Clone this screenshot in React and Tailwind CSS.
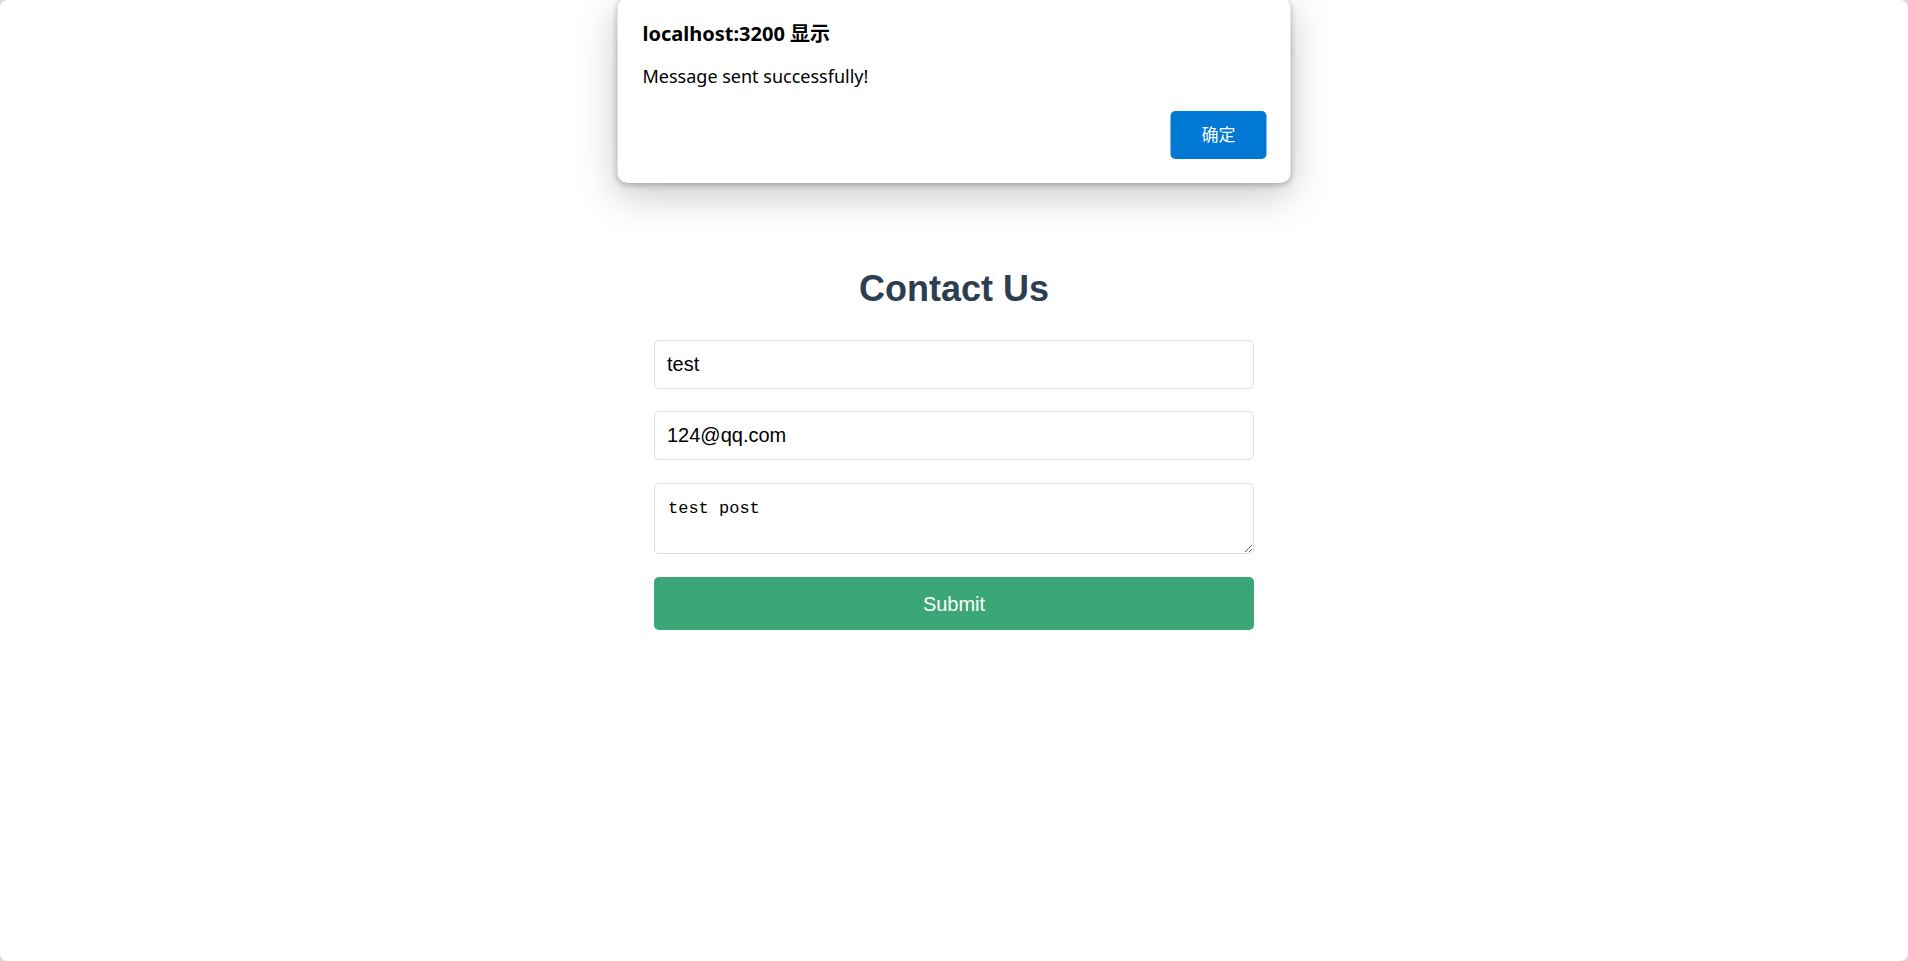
import React from 'react';

// Browser alert that sits over the page
const AlertBox = () => (
  <div
    className="absolute left-1/2 top-[-2px] w-[673px] -translate-x-1/2 rounded-[10px] bg-white pt-[24px] pb-[24px] pl-[25px] pr-[24px] shadow-[0_12px_40px_rgba(0,0,0,0.22),0_2px_6px_rgba(0,0,0,0.25)]"
    style={{ fontFamily: '"Noto Sans", "Noto Sans CJK SC", sans-serif' }}
  >
    <div className="text-[20px] font-bold leading-[24px] text-black">localhost:3200 显示</div>
    <div className="mt-[18px] text-[18px] leading-[24px] text-black">Message sent successfully!</div>
    <div className="mt-[23px] flex justify-end">
      <button className="flex h-[48px] w-[96px] items-center justify-center rounded-[5px] bg-[#0078d4] text-[17px] text-white">
        确定
      </button>
    </div>
  </div>
);

const ContactPage = () => {
  return (
    <div className="h-[961px] bg-[#dcdcdc]">
      <div className="relative h-full overflow-hidden rounded-[8px] bg-white">
        <AlertBox />

        <div
          className="flex flex-col items-center pt-[268px]"
          style={{ fontFamily: '"Liberation Sans", Arial, sans-serif' }}
        >
          <h2 className="text-[36px] font-bold leading-[42px] text-[#2c3e50]">Contact Us</h2>

          <form className="mt-[30px] flex w-[600px] flex-col" onSubmit={(e) => e.preventDefault()}>
            <input
              type="text"
              defaultValue="test"
              className="h-[49px] w-full rounded-[5px] border border-[#dddddd] px-[12px] text-[20px] text-black outline-none"
            />
            <input
              type="email"
              defaultValue="124@qq.com"
              className="mt-[22px] h-[49px] w-full rounded-[5px] border border-[#dddddd] px-[12px] text-[20px] text-black outline-none"
            />
            <textarea
              defaultValue="test post"
              className="mt-[23px] block h-[71px] w-full rounded-[5px] border border-[#dddddd] px-[13px] pt-[15px] text-[17px] leading-[20px] text-black outline-none"
              style={{ fontFamily: '"Liberation Mono", monospace' }}
            />
            <button
              type="submit"
              className="mt-[23px] h-[53px] w-full rounded-[5px] bg-[#3ba776] text-[20px] text-white"
            >
              Submit
            </button>
          </form>
        </div>
      </div>
    </div>
  );
};

export default ContactPage;
